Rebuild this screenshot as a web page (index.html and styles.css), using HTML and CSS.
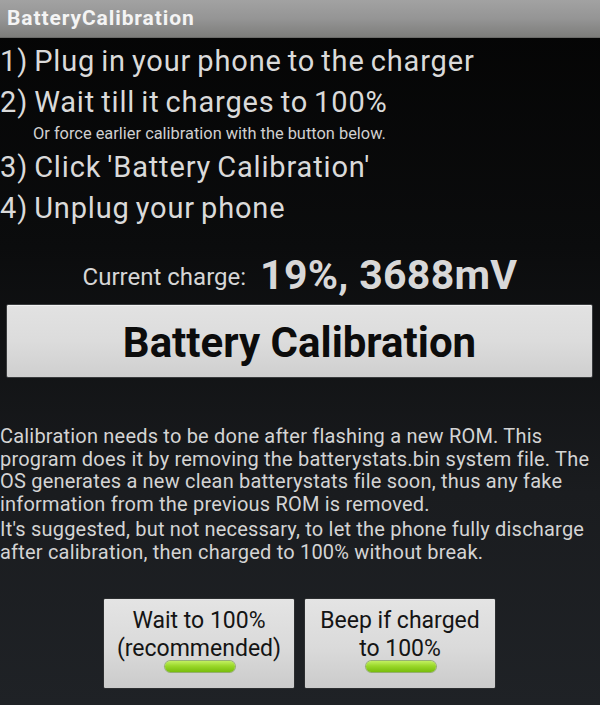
FILE: index.html
```html
<!DOCTYPE html>
<html>
<head>
<meta charset="utf-8">
<link rel="stylesheet" href="styles.css">
</head>
<body>
<div class="screen">
  <header class="titlebar">BatteryCalibration</header>
  <section class="steps">
    <div class="step">1) Plug in your phone to the charger</div>
    <div class="step">2) Wait till it charges to 100%</div>
    <div class="note">Or force earlier calibration with the button below.</div>
    <div class="step step-3">3) Click 'Battery Calibration'</div>
    <div class="step">4) Unplug your phone</div>
  </section>
  <div class="charge">
    <span class="charge-label">Current charge:</span>
    <span class="charge-value">19%, 3688mV</span>
  </div>
  <div class="main-btn-wrap">
    <button class="main-btn">Battery Calibration</button>
  </div>
  <div class="info">
    <p>Calibration needs to be done after flashing a new ROM. This program does it by removing the batterystats.bin system file. The OS generates a new clean batterystats file soon, thus any fake information from the previous ROM is removed.</p>
    <p>It's suggested, but not necessary, to let the phone fully discharge after calibration, then charged to 100% without break.</p>
  </div>
  <div class="toggles">
    <button class="toggle"><span>Wait to 100%<br>(recommended)</span><i class="indicator"></i></button>
    <button class="toggle"><span>Beep if charged<br>to 100%</span><i class="indicator"></i></button>
  </div>
</div>
</body>
</html>
```
FILE: styles.css
```css
html, body {
  margin: 0;
  padding: 0;
}
body {
  width: 600px;
  height: 705px;
  overflow: hidden;
  font-family: Roboto, "Noto Sans", sans-serif;
  background: linear-gradient(180deg, #040404 0%, #0b0c0d 35%, #1a1c1f 70%, #1f2226 100%);
  color: #dcdcdc;
}
.screen {
  display: flex;
  flex-direction: column;
  height: 705px;
}
.titlebar {
  height: 38px;
  box-sizing: border-box;
  padding-left: 7px;
  line-height: 36px;
  font-size: 21px;
  font-weight: 700;
  letter-spacing: 0.9px;
  color: #f4f4f4;
  background: linear-gradient(180deg, #a2a2a2 0%, #959595 50%, #7d7d7b 100%);
  border-bottom: 1px solid #6a6a68;
}
.steps {
  padding-top: 3px;
}
.step {
  font-size: 29px;
  line-height: 41px;
  letter-spacing: 0.85px;
  word-spacing: -2px;
  color: #dadada;
  white-space: nowrap;
}
.step-3 {
  margin-top: 3px;
}
.note {
  font-size: 16.4px;
  line-height: 21px;
  padding-left: 33px;
  color: #d0d0d0;
}
.charge {
  display: flex;
  justify-content: center;
  align-items: center;
  gap: 14px;
  margin-top: 21px;
  height: 50px;
}
.charge-label {
  font-size: 24px;
  color: #d6d6d6;
  padding-top: 4px;
}
.charge-value {
  font-size: 41px;
  font-weight: 700;
  letter-spacing: 0.3px;
  color: #d8d8d8;
}
.main-btn-wrap {
  padding: 4px 7px 0 6px;
}
.main-btn {
  display: block;
  width: 100%;
  height: 74px;
  border: 1px solid #3a3c3e;
  border-radius: 2px;
  background: linear-gradient(180deg, #e2e2e2 0%, #dcdcdc 50%, #cfcfcf 100%);
  box-shadow: inset 0 1px 0 #f2f2f2;
  font-family: Roboto, sans-serif;
  font-size: 42px;
  font-weight: 700;
  color: #0c0c0c;
  padding: 3px 0 0;
}
.info {
  margin-top: 47px;
  font-size: 20px;
  line-height: 22.7px;
  letter-spacing: 0.2px;
  color: #d4d4d4;
}
.info p {
  margin: 0;
}
.info p + p {
  margin-top: 2px;
}
.toggles {
  display: flex;
  gap: 9px;
  margin-top: 35px;
  padding-left: 103px;
}
.toggle {
  position: relative;
  width: 192px;
  height: 91px;
  box-sizing: border-box;
  border: 1px solid #2c2e30;
  border-radius: 2px;
  background: linear-gradient(180deg, #e4e4e4 0%, #dadada 55%, #cbcbcb 100%);
  padding: 8px 0 0;
  display: flex;
  justify-content: center;
  align-items: flex-start;
  font-family: Roboto, sans-serif;
  font-size: 23px;
  line-height: 28px;
  color: #141414;
}
.indicator {
  position: absolute;
  left: 61px;
  top: 62px;
  width: 70px;
  height: 11px;
  border-radius: 6px;
  background: linear-gradient(180deg, #c2f060 0%, #9ad82a 45%, #78bd0c 100%);
  box-shadow: 0 0 0 1px rgba(90, 140, 20, 0.5);
}
```
